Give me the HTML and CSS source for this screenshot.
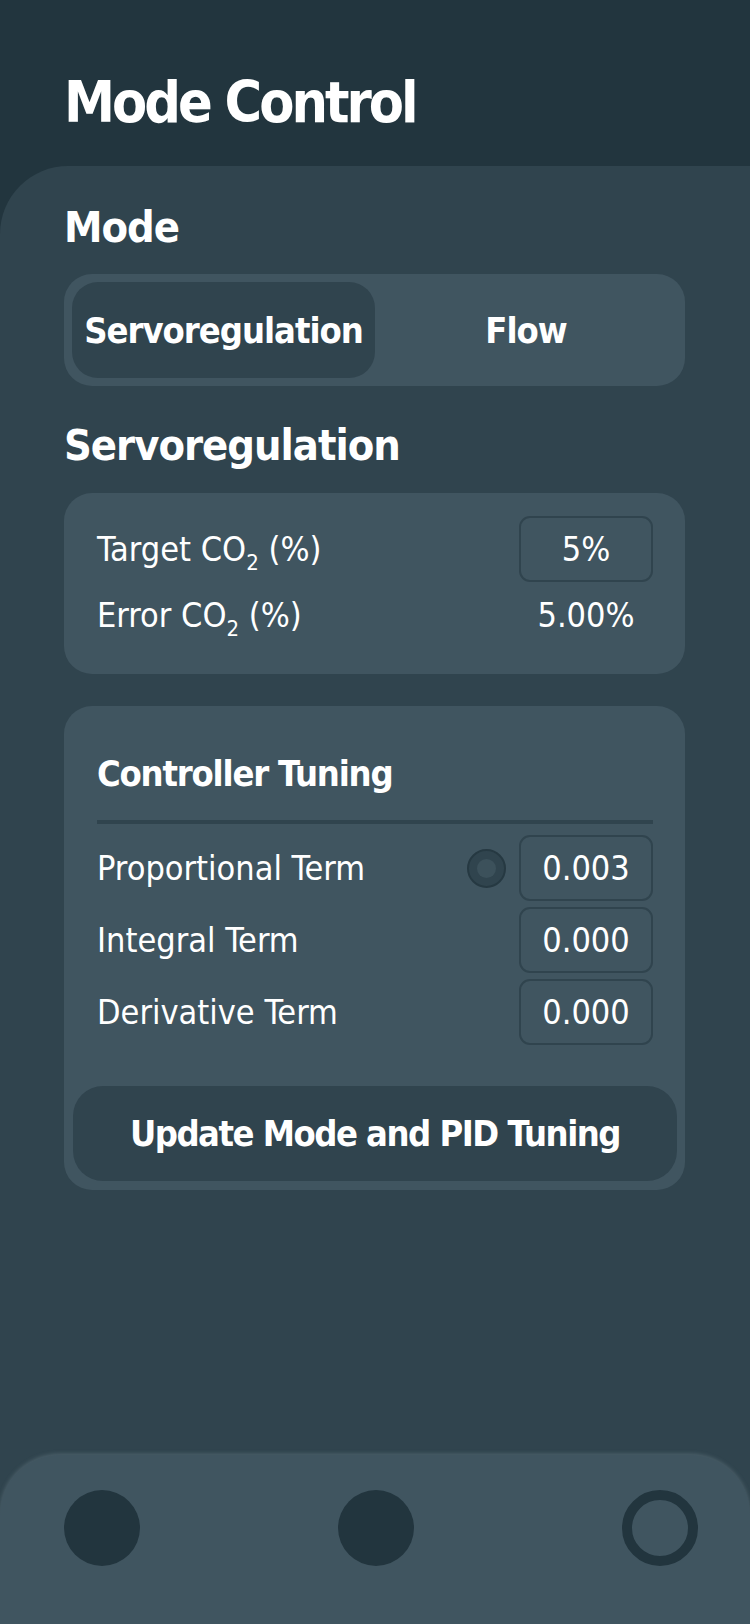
FILE: index.html
```html
<!DOCTYPE html>
<html lang="en">
<head>
<meta charset="utf-8">
<title>Mode Control</title>
<link rel="stylesheet" href="styles.css">
</head>
<body>
<div class="app">
  <header class="top">
    <h1 class="title">Mode Control</h1>
  </header>
  <main class="panel">
    <h2 class="heading heading-mode">Mode</h2>
    <div class="segmented">
      <button class="seg seg-active">Servoregulation</button>
      <button class="seg">Flow</button>
    </div>

    <h2 class="heading heading-servo">Servoregulation</h2>
    <section class="card card-servo">
      <div class="row">
        <span class="label">Target CO<sub>2</sub> (%)</span>
        <span class="field">5%</span>
      </div>
      <div class="row">
        <span class="label">Error CO<sub>2</sub> (%)</span>
        <span class="value">5.00%</span>
      </div>
    </section>

    <section class="card card-tuning">
      <div class="tuning-body">
        <h3 class="subheading">Controller Tuning</h3>
        <div class="divider"></div>
        <div class="rows">
          <div class="row">
            <span class="label">Proportional Term</span>
            <span class="controls">
              <span class="radio"><span class="radio-dot"></span></span>
              <span class="field">0.003</span>
            </span>
          </div>
          <div class="row">
            <span class="label">Integral Term</span>
            <span class="field">0.000</span>
          </div>
          <div class="row">
            <span class="label">Derivative Term</span>
            <span class="field">0.000</span>
          </div>
        </div>
      </div>
      <button class="update">Update Mode and PID Tuning</button>
    </section>

    <nav class="bottom-nav">
      <span class="dot"></span>
      <span class="dot"></span>
      <span class="dot dot-ring"></span>
    </nav>
  </main>
</div>
</body>
</html>
```
FILE: styles.css
```css
* { box-sizing: border-box; }

html, body {
  margin: 0;
  padding: 0;
}

body {
  background: #22353e;
  font-family: "DejaVu Sans Condensed", "Liberation Sans Narrow", "Liberation Sans", sans-serif;
  color: #ffffff;
}

.app {
  width: 750px;
  height: 1624px;
  display: flex;
  flex-direction: column;
  overflow: hidden;
}

.top {
  height: 166px;
  padding: 73px 0 0 64px;
  background: #22353e;
  flex: none;
}

.title {
  margin: 0;
  font-size: 57px;
  line-height: 58px;
  font-weight: 700;
  letter-spacing: -3px;
}

.panel {
  flex: 1;
  display: flex;
  flex-direction: column;
  background: #30444e;
  border-top-left-radius: 68px;
  padding: 40px 65px 0 64px;
}

.heading {
  margin: 0;
  font-weight: 700;
  font-size: 43px;
  line-height: 43px;
  letter-spacing: -1px;
}

.segmented {
  margin-top: 25px;
  height: 112px;
  padding: 8px;
  display: flex;
  background: #405560;
  border-radius: 28px;
}

.seg {
  flex: 1;
  border: none;
  border-radius: 26px;
  background: transparent;
  color: #ffffff;
  font-family: inherit;
  font-weight: 700;
  font-size: 36px;
  letter-spacing: -1px;
  padding: 0;
}

.seg-active {
  flex: none;
  width: 303px;
  background: #30444e;
}

.heading-servo {
  margin-top: 38px;
}

.card {
  background: #405560;
  border-radius: 28px;
}

.card-servo {
  margin-top: 26px;
  padding: 23px 32px 26px 33px;
}

.row {
  height: 66px;
  display: flex;
  align-items: center;
  justify-content: space-between;
}

.label {
  font-size: 34px;
  line-height: 34px;
}

.label sub {
  font-size: 22px;
  vertical-align: -9px;
  line-height: 0;
}

.field, .value {
  width: 134px;
  height: 66px;
  display: flex;
  align-items: center;
  justify-content: center;
  font-size: 34px;
}

.field {
  border: 2px solid #30444e;
  border-radius: 11px;
}

.card-tuning {
  margin-top: 32px;
  padding: 0 8px 9px 9px;
}

.tuning-body {
  padding: 50px 24px 0 24px;
}

.subheading {
  margin: 0;
  font-size: 36px;
  line-height: 36px;
  font-weight: 700;
  letter-spacing: -1.2px;
}

.divider {
  margin-top: 28px;
  height: 4px;
  background: #30444e;
}

.rows {
  margin-top: 11px;
  display: flex;
  flex-direction: column;
  gap: 6px;
}

.controls {
  display: flex;
  align-items: center;
  gap: 13px;
}

.radio {
  width: 39px;
  height: 39px;
  border-radius: 50%;
  background: #30444e;
  border: 2px solid #263942;
  display: flex;
  align-items: center;
  justify-content: center;
}

.radio-dot {
  width: 19px;
  height: 19px;
  border-radius: 50%;
  background: #3c515b;
}

.update {
  display: block;
  width: 100%;
  margin-top: 41px;
  height: 95px;
  border: none;
  border-radius: 30px;
  background: #30444e;
  color: #ffffff;
  font-family: inherit;
  font-weight: 700;
  font-size: 36px;
  letter-spacing: -1.5px;
}

.bottom-nav {
  margin: auto -65px 0 -64px;
  height: 169px;
  flex: none;
  background: #405560;
  border-radius: 60px 60px 0 0;
  box-shadow: 0 -1px 4px rgba(140, 160, 170, 0.35);
  padding: 35px 0 0 64px;
  display: flex;
  gap: 198px;
  align-items: flex-start;
}

.dot {
  width: 76px;
  height: 76px;
  border-radius: 50%;
  background: #22353e;
}

.dot-ring {
  margin-left: 10px;
  background: transparent;
  border: 10px solid #22353e;
}
```
